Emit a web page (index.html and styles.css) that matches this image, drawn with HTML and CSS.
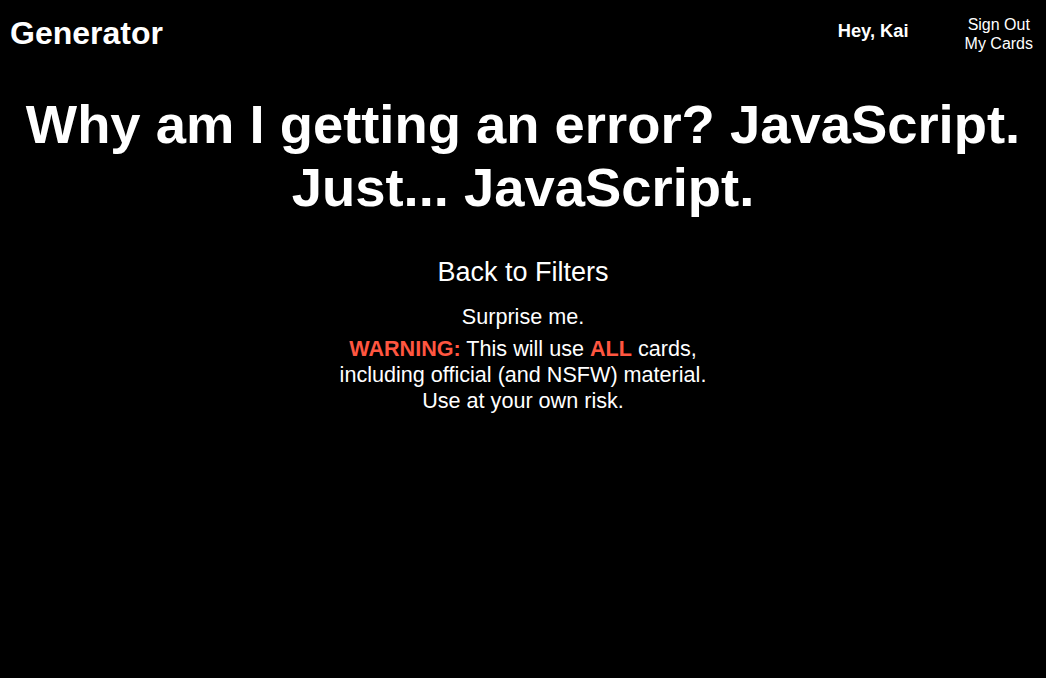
FILE: index.html
```html
<!DOCTYPE html>
<html lang="en">
<head>
<meta charset="utf-8">
<title>Generator</title>
<link rel="stylesheet" href="styles.css">
</head>
<body>
<header class="topbar">
  <div class="brand">Generator</div>
  <div class="user">
    <div class="greeting">Hey, Kai</div>
    <nav class="links">
      <a href="#">Sign Out</a>
      <a href="#">My Cards</a>
    </nav>
  </div>
</header>
<main class="content">
  <h1 class="title">Why am I getting an error? JavaScript. Just... JavaScript.</h1>
  <a class="back" href="#">Back to Filters</a>
  <p class="surprise">Surprise me.</p>
  <p class="warning"><span class="red">WARNING:</span> This will use <span class="red">ALL</span> cards,<br>including official (and NSFW) material.<br>Use at your own risk.</p>
</main>
</body>
</html>
```
FILE: styles.css
```css
html, body {
  margin: 0;
  padding: 0;
  background: #000;
  color: #fff;
  font-family: "Liberation Sans", Arial, sans-serif;
}
a {
  color: #fff;
  text-decoration: none;
}
.topbar {
  display: flex;
  justify-content: space-between;
  align-items: flex-start;
  padding: 15px 13px 0 10px;
}
.brand {
  font-size: 32px;
  font-weight: bold;
  line-height: 37px;
}
.user {
  display: flex;
  align-items: flex-start;
  gap: 56px;
}
.greeting {
  font-size: 18.3px;
  font-weight: bold;
  line-height: 21px;
  margin-top: 5px;
}
.links {
  display: flex;
  flex-direction: column;
  align-items: center;
  font-size: 16px;
  line-height: 18.5px;
  margin-top: 1px;
}
.content {
  display: flex;
  flex-direction: column;
  align-items: center;
  text-align: center;
}
.title {
  font-size: 54.4px;
  line-height: 62.5px;
  font-weight: bold;
  margin: 41px 20px 0;
}
.back {
  font-size: 27px;
  line-height: 31px;
  margin-top: 38px;
}
.surprise {
  font-size: 21.6px;
  line-height: 26px;
  margin: 16px 0 0;
}
.warning {
  font-size: 21.6px;
  line-height: 26px;
  margin: 6px 0 0;
}
.red {
  color: #ff5640;
  font-weight: bold;
}
```
